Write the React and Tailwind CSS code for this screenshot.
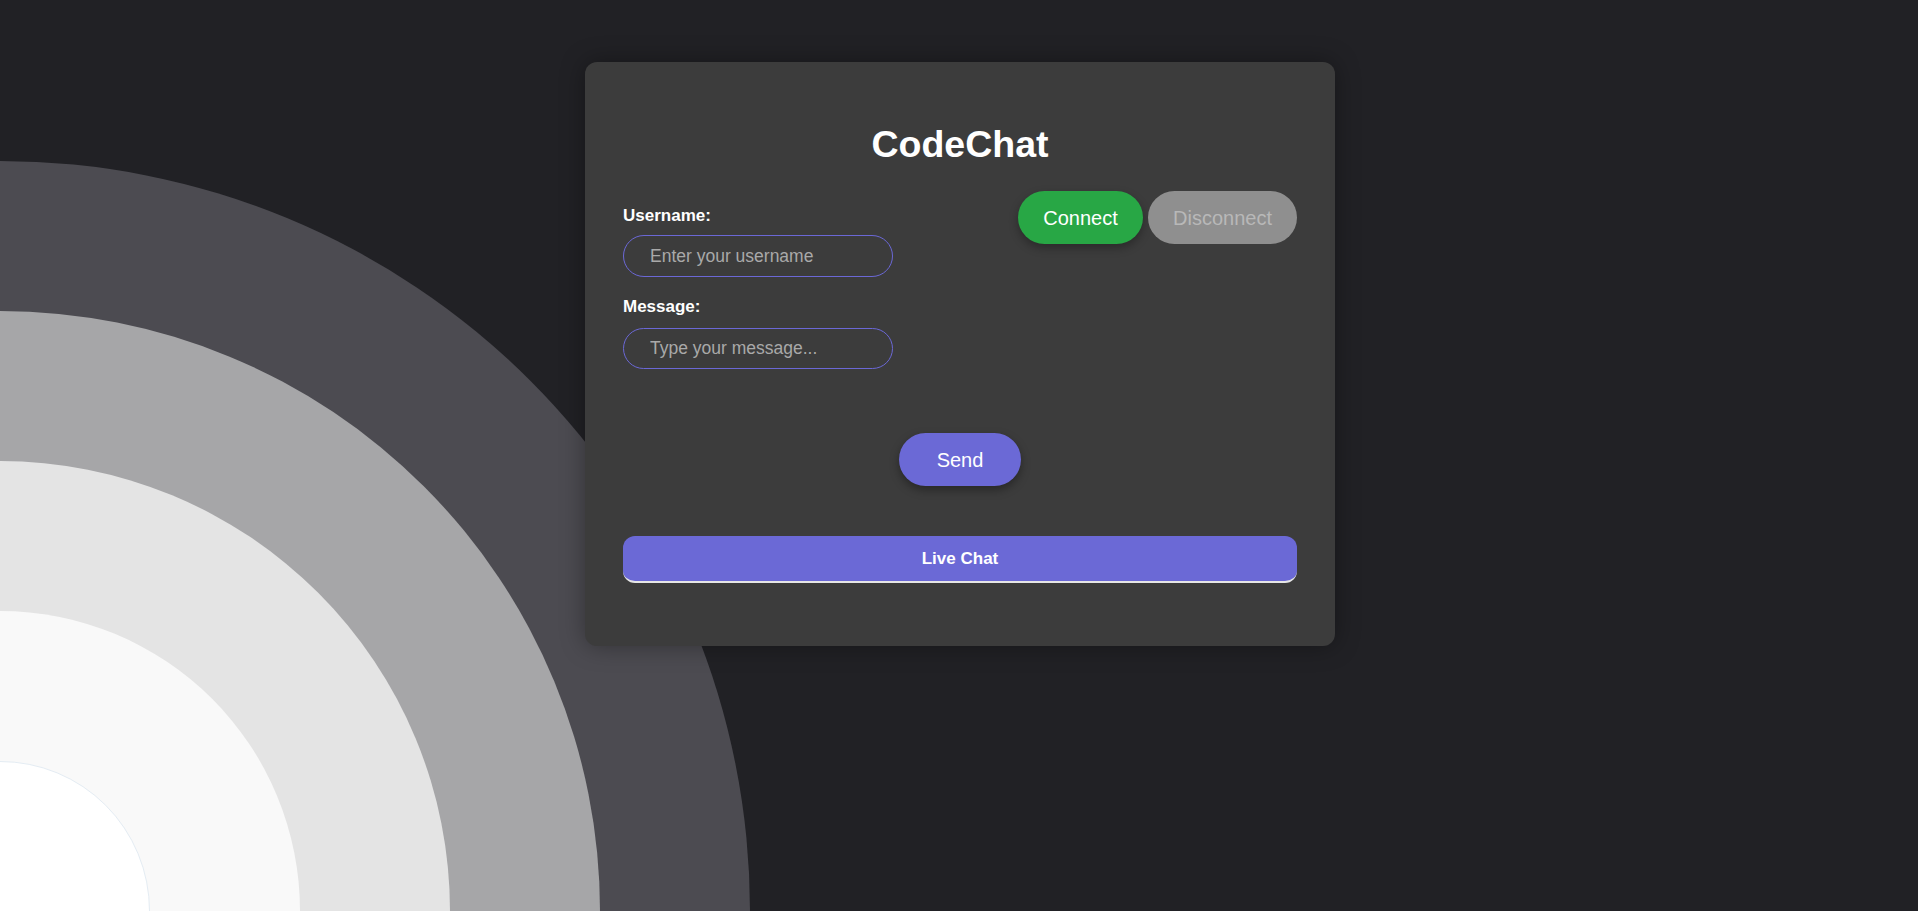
import React, { useState } from 'react';

const rings = [
  { size: 'w-[1500px] h-[1500px] -left-[750px] -bottom-[750px]', color: 'bg-[#4c4b51]' },
  { size: 'w-[1200px] h-[1200px] -left-[600px] -bottom-[600px]', color: 'bg-[#a6a6a8]' },
  { size: 'w-[900px] h-[900px] -left-[450px] -bottom-[450px]', color: 'bg-[#e4e4e4]' },
  { size: 'w-[600px] h-[600px] -left-[300px] -bottom-[300px]', color: 'bg-[#f9f9f9]' },
  { size: 'w-[300px] h-[300px] -left-[150px] -bottom-[150px]', color: 'bg-white border border-[#e4ecf3]' },
];

export default function App() {
  const [username, setUsername] = useState('');
  const [message, setMessage] = useState('');
  const [connected, setConnected] = useState(false);

  return (
    <div
      className="relative h-[911px] w-full overflow-hidden bg-[#212125]"
      style={{ fontFamily: '"Liberation Sans", Arial, sans-serif' }}
    >
      {/* Fondo de círculos */}
      {rings.map((r, i) => (
        <div key={i} className={`absolute rounded-full ${r.size} ${r.color}`} />
      ))}

      <div className="relative flex justify-center pt-[62px] pl-[2px]">
        <div className="w-[750px] h-[584px] rounded-[12px] bg-[#3c3c3c] shadow-[0_0_24px_rgba(0,0,0,0.35)] px-[38px] pt-[61px]">
          <h1 className="m-0 text-center text-[37.5px] leading-[42px] font-bold text-white">CodeChat</h1>

          <div className="mt-[26px] flex items-start justify-between">
            <div className="pt-[15px] flex flex-col">
              <label className="text-[17px] leading-[20px] font-bold text-white mb-[9px]">Username:</label>
              <input
                value={username}
                onChange={(e) => setUsername(e.target.value)}
                placeholder="Enter your username"
                className="w-[270px] h-[42px] rounded-full border border-[#6b68d6] bg-transparent pl-[26px] text-[17.5px] text-white placeholder:text-[#a9a9a9] outline-none"
              />
              <label className="mt-[20px] text-[17px] leading-[20px] font-bold text-white mb-[11px]">Message:</label>
              <input
                value={message}
                onChange={(e) => setMessage(e.target.value)}
                placeholder="Type your message..."
                className="w-[270px] h-[41px] rounded-full border border-[#6b68d6] bg-transparent pl-[26px] text-[17.5px] text-white placeholder:text-[#a9a9a9] outline-none"
              />
            </div>

            <div className="flex gap-[5px]">
              <button
                onClick={() => setConnected(true)}
                className="w-[125px] h-[53px] rounded-full bg-[#28a745] text-[20px] text-white shadow-[0_4px_10px_rgba(0,0,0,0.3)]"
              >
                Connect
              </button>
              <button
                onClick={() => setConnected(false)}
                className="w-[149px] h-[53px] rounded-full bg-[#8f8f8f] text-[20px] text-[#b8b8b8]"
              >
                Disconnect
              </button>
            </div>
          </div>

          <div className="mt-[64px] flex justify-center">
            <button className="w-[122px] h-[53px] rounded-full bg-[#6b69d6] text-[20px] text-white shadow-[0_4px_10px_rgba(0,0,0,0.35)]">
              Send
            </button>
          </div>

          <div className="mt-[50px] h-[47px] rounded-[12px] bg-[#6b69d6] border-b-2 border-[#e6e6e6] flex items-center justify-center">
            <span className="text-[17px] font-bold text-white">Live Chat</span>
          </div>
        </div>
      </div>
    </div>
  );
}
